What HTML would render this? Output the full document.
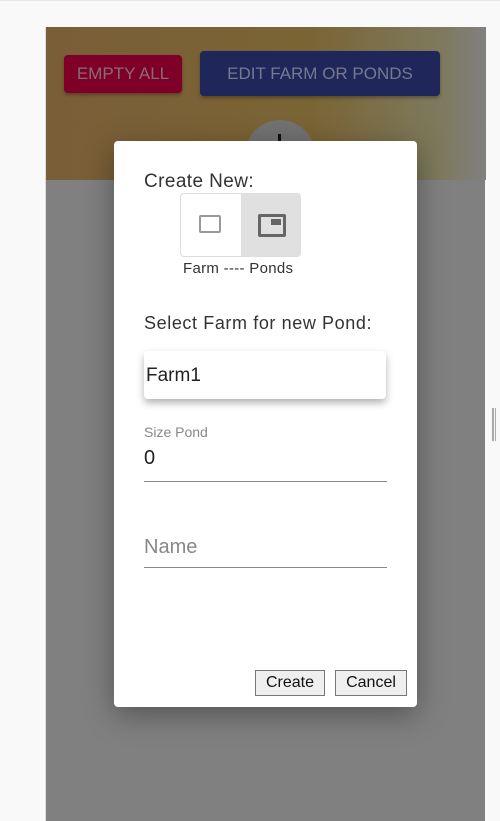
<!DOCTYPE html>
<html><head><style>
*{box-sizing:border-box;margin:0;padding:0}
body{width:500px;height:821px;background:#f9f9f9;position:relative;overflow:hidden;font-family:"Liberation Sans",sans-serif}
.top{position:absolute;left:0;top:0;width:500px;height:1px;background:#e6e6e6}
.panel{position:absolute;left:45px;top:27px;width:440px;height:794px;background:#808080;border-left:1px solid #ddd}
.head{position:absolute;left:0;top:0;width:440px;height:153px;background:linear-gradient(90deg,#7a5e38 0%,#7a6434 60%,#7e7a5e 90%,#808080 100%)}
.b1{position:absolute;left:18px;top:28px;width:118px;height:38px;background:#7e0029;border-radius:4px;color:#8a6b74;font-size:17px;line-height:38px;text-align:center;box-shadow:0 2px 3px rgba(0,0,0,.3)}
.b2{position:absolute;left:154px;top:24px;width:240px;height:45px;background:#1f2659;border-radius:4px;color:#767a8e;font-size:17px;line-height:45px;text-align:center;box-shadow:0 2px 3px rgba(0,0,0,.3)}
.circ{position:absolute;left:199px;top:93px;width:70px;height:70px;border-radius:35px;background:#727272}
.circ i{position:absolute;left:33px;top:14px;width:3px;height:12px;background:#111}
.strip{position:absolute;left:492px;top:408px;width:4px;height:33px;border-left:2px solid #aaa;border-right:1px solid #aaa}
.dlg{position:absolute;left:114px;top:141px;width:303px;height:566px;background:#fff;border-radius:4px;box-shadow:0 8px 30px rgba(0,0,0,.35);color:#333}
.t{position:absolute;font-size:18px;letter-spacing:.4px}
.tog{position:absolute;left:66px;top:52px;width:121px;height:64px;border:1px solid #ddd;border-radius:4px;overflow:hidden}
.tog .r{position:absolute;left:60px;top:0;width:61px;height:64px;background:#e0e0e0;border-left:1px solid #ddd}
.field{position:absolute;left:30px;width:243px;border-bottom:1px solid #888}
</style></head><body>
<div class="top"></div>
<div class="panel">
 <div class="head"></div>
 <div class="b1">EMPTY ALL</div>
 <div class="b2">EDIT FARM OR PONDS</div>
 <div class="circ"><i></i></div>
</div>
<div class="strip"></div>
<div class="dlg">
 <div class="t" style="left:30px;top:30px;font-size:19px">Create New:</div>
 <div class="tog">
  <div style="position:absolute;left:18px;top:21px;width:22px;height:18px;border:2px solid #999;border-radius:2px"></div>
  <div class="r"><div style="position:absolute;left:16px;top:20px;width:28px;height:23px;border:3px solid #666;border-radius:2px"><div style="position:absolute;right:2px;top:2px;width:10px;height:6px;background:#666"></div></div></div>
 </div>
 <div style="position:absolute;left:69px;top:119px;font-size:15px;letter-spacing:.3px;color:#333">Farm ---- Ponds</div>
 <div class="t" style="left:30px;top:172px;font-size:18px;letter-spacing:.6px">Select Farm for new Pond:</div>
 <div style="position:absolute;left:30px;top:210px;width:242px;height:48px;border-radius:4px;box-shadow:0 4px 8px rgba(0,0,0,.3);font-size:19px;padding:14px 2px;color:#222">Farm1</div>
 <div style="position:absolute;left:30px;top:283px;font-size:14px;color:#888">Size Pond</div>
 <div class="field" style="top:306px;height:35px;font-size:20px;color:#222">0</div>
 <div class="field" style="top:395px;height:32px;font-size:20px;color:#888">Name</div>
 <div style="position:absolute;left:141px;top:529px;width:70px;height:26px;border:1px solid #777;background:#efefef;font-size:16px;text-align:center;line-height:24px;color:#111">Create</div>
 <div style="position:absolute;left:221px;top:529px;width:72px;height:26px;border:1px solid #777;background:#efefef;font-size:16px;text-align:center;line-height:24px;color:#111">Cancel</div>
</div>
</body></html>
